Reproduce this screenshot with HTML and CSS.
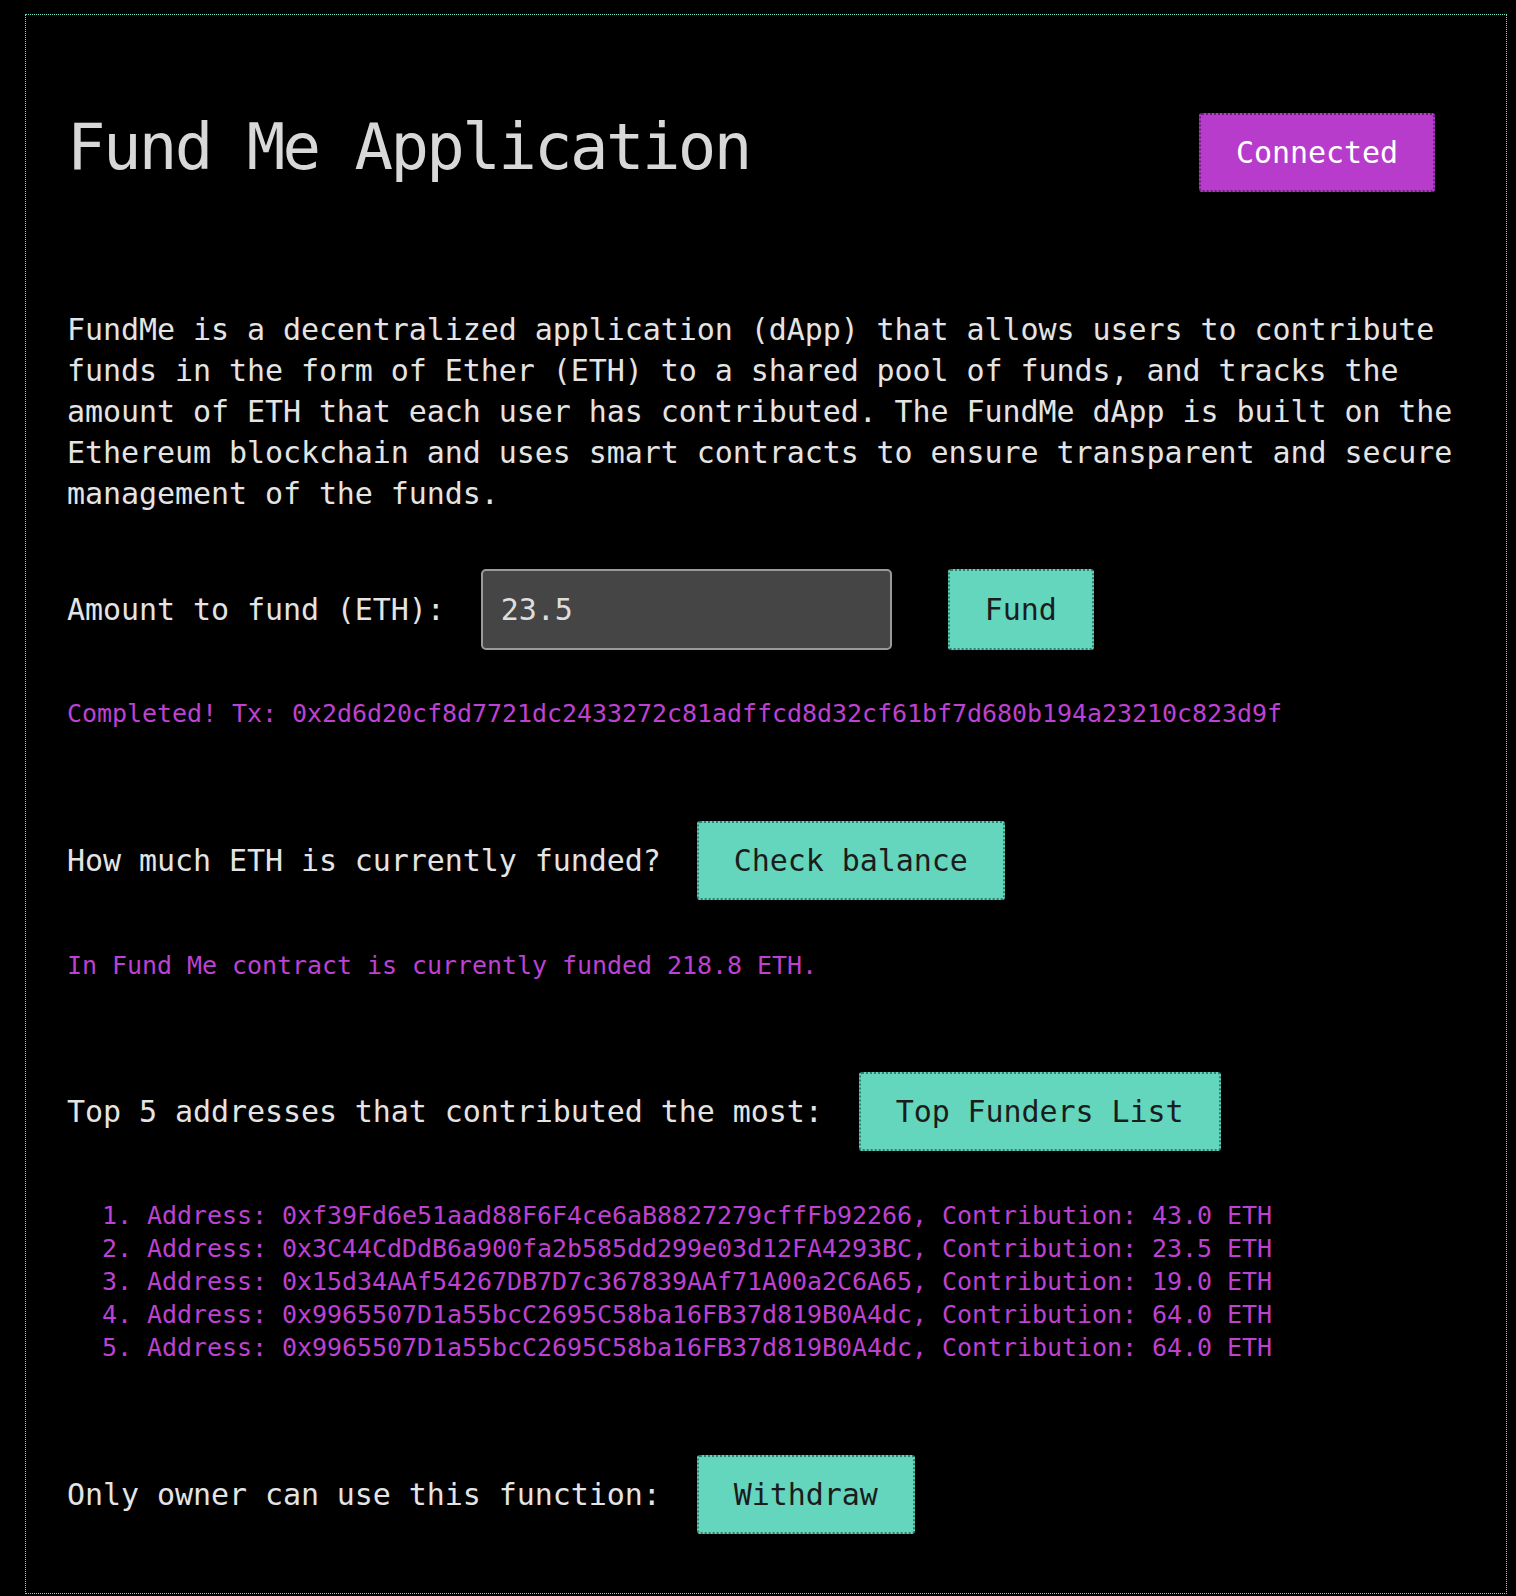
FILE: index.html
```html
<!DOCTYPE html>
<html lang="en">
<head>
<meta charset="utf-8">
<title>Fund Me Application</title>
<link rel="stylesheet" href="styles.css">
</head>
<body>
<div class="app">
  <header class="header">
    <h1 class="title">Fund Me Application</h1>
    <button class="btn btn-connect">Connected</button>
  </header>

  <p class="intro">FundMe is a decentralized application (dApp) that allows users to contribute funds in the form of Ether (ETH) to a shared pool of funds, and tracks the amount of ETH that each user has contributed. The FundMe dApp is built on the Ethereum blockchain and uses smart contracts to ensure transparent and secure management of the funds.</p>

  <div class="row row-fund">
    <label class="label" for="amount">Amount to fund (ETH):</label>
    <input class="amount" id="amount" type="text" value="23.5">
    <button class="btn btn-teal btn-fund">Fund</button>
  </div>
  <p class="result">Completed! Tx: 0x2d6d20cf8d7721dc2433272c81adffcd8d32cf61bf7d680b194a23210c823d9f</p>

  <div class="row section section-balance">
    <span class="label">How much ETH is currently funded?</span>
    <button class="btn btn-teal">Check balance</button>
  </div>
  <p class="result result-balance">In Fund Me contract is currently funded 218.8 ETH.</p>

  <div class="row section section-top">
    <span class="label">Top 5 addresses that contributed the most:</span>
    <button class="btn btn-teal">Top Funders List</button>
  </div>
  <ol class="funders">
    <li>Address: 0xf39Fd6e51aad88F6F4ce6aB8827279cffFb92266, Contribution: 43.0 ETH</li>
    <li>Address: 0x3C44CdDdB6a900fa2b585dd299e03d12FA4293BC, Contribution: 23.5 ETH</li>
    <li>Address: 0x15d34AAf54267DB7D7c367839AAf71A00a2C6A65, Contribution: 19.0 ETH</li>
    <li>Address: 0x9965507D1a55bcC2695C58ba16FB37d819B0A4dc, Contribution: 64.0 ETH</li>
    <li>Address: 0x9965507D1a55bcC2695C58ba16FB37d819B0A4dc, Contribution: 64.0 ETH</li>
  </ol>

  <div class="row section section-withdraw">
    <span class="label">Only owner can use this function:</span>
    <button class="btn btn-teal">Withdraw</button>
  </div>
</div>
</body>
</html>
```

FILE: styles.css
```css
html, body {
  margin: 0;
  padding: 0;
  background: #000;
}

body {
  font-family: "DejaVu Sans Mono", "Liberation Mono", monospace;
  color: #e2e2e2;
  font-size: 30px;
  letter-spacing: -0.07px;
}

.app {
  margin: 14px 9px 0 25px;
  border: 1px dotted #6ae0c6;
  padding: 93px 41px 59px 41px;
}

.header {
  display: flex;
  justify-content: space-between;
  align-items: flex-start;
}

.title {
  margin: 2px 0 0 0;
  font-size: 64px;
  font-weight: normal;
  letter-spacing: -2.6px;
  line-height: normal;
  color: #d8d8d8;
}

.btn {
  font-family: inherit;
  font-size: 30px;
  letter-spacing: -0.07px;
  line-height: 35px;
  padding: 20px 35px;
  border: 2px dotted;
  border-radius: 3px;
  cursor: pointer;
}

.btn-connect {
  margin-top: 5px;
  margin-right: 30px;
  background: #b83ccc;
  border-color: #6a1f78;
  color: #ffffff;
}

.btn-teal {
  background: #64d6be;
  border-color: #2f7f6e;
  color: #1c1c1c;
}

.intro {
  margin: 117px 0 0 0;
  line-height: 41px;
  color: #e4e4e4;
}

.row {
  display: flex;
  align-items: center;
  gap: 36px;
}

.row-fund {
  margin-top: 55px;
}

.section-balance {
  margin-top: 93px;
}

.section-top {
  margin-top: 92px;
}

.section-withdraw {
  margin-top: 91px;
}

.label {
  color: #e4e4e4;
}

.amount {
  box-sizing: border-box;
  width: 411px;
  height: 81px;
  padding: 0 18px;
  background: #454545;
  border: 2px solid #9a9a9a;
  border-radius: 5px;
  color: #dedede;
  font-family: inherit;
  font-size: 30px;
  letter-spacing: -0.07px;
  outline: none;
}

.btn-fund {
  margin-left: 20px;
  height: 81px;
}

.result {
  margin: 49px 0 0 0;
  font-size: 25px;
  letter-spacing: -0.05px;
  color: #bd41d2;
}

.result-balance {
  margin-top: 51px;
}

.funders {
  margin: 48px 0 0 0;
  padding-left: 80px;
  font-size: 25px;
  letter-spacing: -0.05px;
  line-height: 33px;
  color: #bd41d2;
}
```
